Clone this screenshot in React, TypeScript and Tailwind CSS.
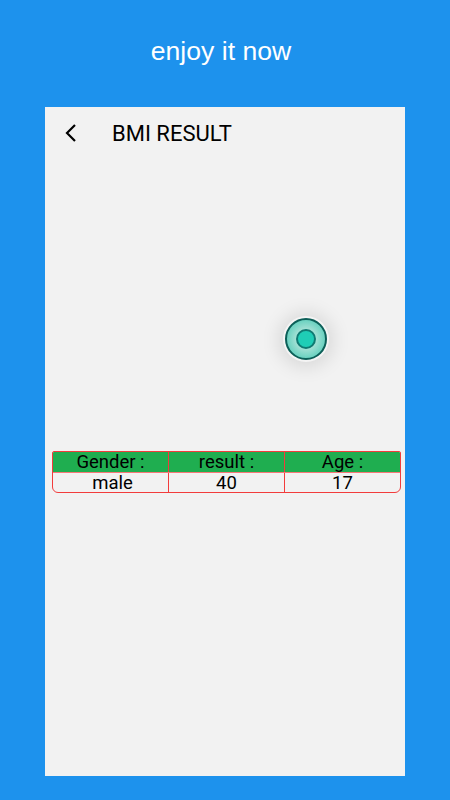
import React from 'react';

function Cell({ children, last, shift }: { children: React.ReactNode; last?: boolean; shift?: boolean }) {
  return (
    <div className={`flex-1 flex items-center justify-center pt-[1px] text-[18.5px] leading-none text-black ${last ? '' : 'border-r border-[#f23c3c]'}`}>
      <span className={shift ? 'pl-[4px]' : ''}>{children}</span>
    </div>
  );
}

export default function App() {
  return (
    <div className="w-[450px] h-[800px] bg-[#1d92ed] flex flex-col items-center overflow-hidden font-['Roboto',sans-serif]">
      <div className="h-[107px] w-full pr-[8px] pt-[36px] text-center text-[26.6px] leading-[30px] text-white font-['Liberation_Sans',sans-serif]">
        enjoy it now
      </div>

      <div className="relative w-[360px] h-[669px] bg-[#f2f2f2] px-[7px]">
        {/* Header */}
        <div className="h-[52px] flex items-center pl-[11px]">
          <svg width="16" height="22" viewBox="0 0 16 22" fill="none" stroke="black" strokeWidth="2.2">
            <path d="M12 3 L4 11 L12 19" />
          </svg>
          <div className="ml-[33px] pt-[1px] text-[22px] text-black leading-none">BMI RESULT</div>
        </div>

        {/* Marker */}
        <div className="absolute left-[238px] top-[209px] w-[46px] h-[46px] rounded-full bg-[#f4f4f4] shadow-[0_1px_18px_5px_rgba(0,0,0,0.10)] flex items-center justify-center">
          <div className="w-[42px] h-[42px] rounded-full border-2 border-[#0c5f58] bg-[radial-gradient(circle,#aee3d9_30%,#6fd3c2_68%,#3cc4ae_100%)] flex items-center justify-center">
            <div className="w-[20px] h-[20px] rounded-full border-2 border-[#0f7a72] bg-[#1fcdb6]" />
          </div>
        </div>

        {/* Table */}
        <div className="mt-[292px] w-[349px] h-[42px] rounded-b-[6px] rounded-t-[2px] border border-[#f23c3c] overflow-hidden">
          <div className="h-[21px] flex bg-[#1fae50] border-b border-[#f87878]">
            <Cell>Gender :</Cell>
            <Cell>result :</Cell>
            <Cell last>Age :</Cell>
          </div>
          <div className="h-[19px] flex">
            <Cell shift>male</Cell>
            <Cell>40</Cell>
            <Cell last>17</Cell>
          </div>
        </div>
      </div>
    </div>
  );
}
